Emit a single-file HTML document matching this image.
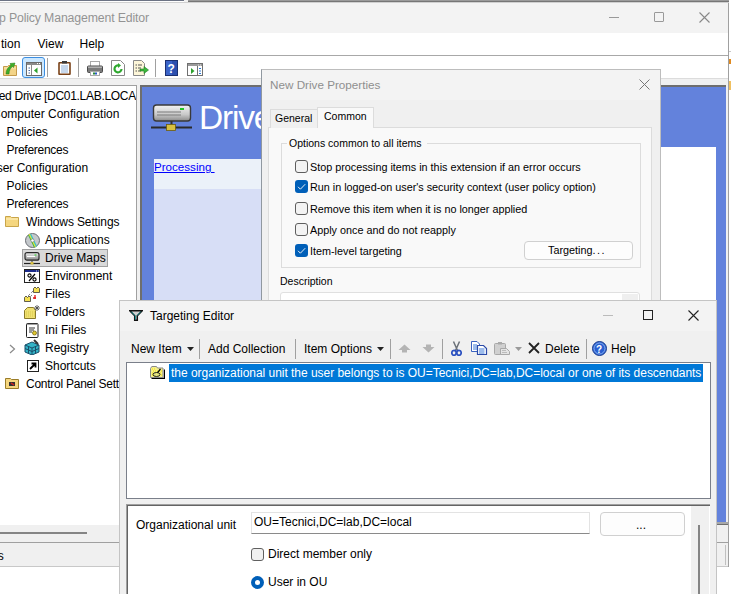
<!DOCTYPE html>
<html><head><meta charset="utf-8">
<style>
*{margin:0;padding:0;box-sizing:border-box}
html,body{width:731px;height:594px;overflow:hidden;background:#fff;font-family:"Liberation Sans",sans-serif;font-size:12px;color:#000}
.a{position:absolute}
.t{position:absolute;white-space:nowrap;line-height:1}
</style></head><body>
<div class="a" id="root" style="left:0;top:0;width:731px;height:594px;overflow:hidden">

<!-- ===== MAIN WINDOW ===== -->
<div class="a" style="left:0;top:0;width:729px;height:567px;background:#f0f0f0"></div>
<!-- top border -->
<div class="a" style="left:0;top:0;width:184px;height:1px;background:#6c7384"></div>
<div class="a" style="left:0;top:1px;width:184px;height:1px;background:#fff"></div>
<div class="a" style="left:188px;top:0;width:543px;height:1px;background:#9a9a9a"></div>
<div class="a" style="left:188px;top:1px;width:543px;height:1px;background:#767676"></div>
<div class="a" style="left:0;top:2px;width:729px;height:1px;background:#d0d0d0"></div>
<!-- title bar -->
<div class="a" style="left:0;top:3px;width:728px;height:30px;background:#f3f3f3"></div>
<div class="t" style="left:-1px;top:12px;font-size:12.3px;color:#939393;letter-spacing:-0.15px">p Policy Management Editor</div>
<div class="a" style="left:609px;top:17px;width:10px;height:1px;background:#999"></div>
<div class="a" style="left:654px;top:12px;width:10px;height:10px;border:1px solid #999;border-radius:1px"></div>
<svg class="a" style="left:699px;top:12px" width="11" height="11"><path d="M0.5 0.5L10.5 10.5M10.5 0.5L0.5 10.5" stroke="#888" stroke-width="1.1"/></svg>
<!-- menu -->
<div class="a" style="left:0;top:33px;width:728px;height:22px;background:#fff"></div>
<div class="t" style="left:1px;top:38px">tion</div>
<div class="t" style="left:37.5px;top:38px">View</div>
<div class="t" style="left:79.5px;top:38px">Help</div>
<div class="a" style="left:0;top:55px;width:728px;height:1px;background:#a8a8a8"></div>
<!-- toolbar -->
<div class="a" style="left:0;top:56px;width:728px;height:22px;background:#fff"></div>
<div class="a" style="left:0;top:78px;width:728px;height:1px;background:#dcdcdc"></div>
<div class="a" style="left:728px;top:3px;width:1px;height:564px;background:#a0a0a0"></div>
<div class="a" style="left:729px;top:0;width:2px;height:594px;background:#fff"></div>

<div class="a" style="left:729px;top:51px;width:2px;height:1px;background:#c8c8c8"></div>
<div class="a" style="left:729px;top:59px;width:2px;height:5px;background:#e08a20"></div>
<div class="a" style="left:729px;top:81px;width:2px;height:9px;background:#f0c060"></div>
<!-- toolbar icons -->
<!-- folder up -->
<svg class="a" style="left:3px;top:61px" width="15" height="15"><path d="M0.5 5.5H4.5L5.5 4.5H13.5V14.5H0.5Z" fill="#f3d488" stroke="#c49a4a"/><path d="M1 7H13" stroke="#fbe7b0"/><path d="M3 13C3 9 5 6 8 4.5L7 2.5L12 2L10.5 6.5L9.5 5.5C7.5 7 6 9.5 6 13Z" fill="#3fae2a" stroke="#247a18" stroke-width="0.5"/></svg>
<div class="a" style="left:22px;top:57px;width:23px;height:21px;background:#cce8ff;border:1px solid #3d8ee0;border-radius:3px"></div>
<svg class="a" style="left:26px;top:62px" width="16" height="14"><rect x="0.5" y="0.5" width="15" height="13" fill="#fff" stroke="#6a6a6a"/><rect x="1" y="1" width="14" height="2" fill="#8a8a8a"/><path d="M11 1.5H12M13 1.5H14" stroke="#fff"/><path d="M5.5 3V13" stroke="#8a8a8a"/><path d="M2.5 6H4M2.5 8.5H4M2.5 11H4" stroke="#4a6aa0"/><path d="M11.5 5.5L8 8.5L11.5 11.5Z" fill="#2ca02c"/></svg>
<div class="a" style="left:47px;top:58px;width:1px;height:19px;background:#a0a0a0"></div>
<svg class="a" style="left:58px;top:61px" width="13" height="14"><rect x="1" y="1.8" width="11" height="11.5" rx="0.5" fill="#fff" stroke="#7a4218" stroke-width="1.6"/><rect x="4" y="0" width="5" height="2.5" fill="#3a3a3a"/><path d="M3 5H10M3 7H10M3 9H10M3 11H10" stroke="#8fb0d8"/></svg>
<div class="a" style="left:78px;top:58px;width:1px;height:19px;background:#a0a0a0"></div>
<svg class="a" style="left:87px;top:61px" width="16" height="15"><rect x="3.5" y="0.5" width="9" height="5" fill="#fff" stroke="#aaa"/><rect x="0.5" y="5" width="15" height="6.5" rx="1" fill="#7a7a7a" stroke="#4a4a4a"/><rect x="1" y="5.5" width="14" height="1.5" fill="#b0b0b0"/><rect x="3.5" y="10.5" width="9" height="4" fill="#fff" stroke="#aaa"/><rect x="6" y="11.5" width="2" height="2" fill="#2a8a3a"/><rect x="8" y="11.5" width="2" height="2" fill="#2a5ac8"/></svg>
<svg class="a" style="left:111px;top:60px" width="14" height="16"><path d="M0.5 0.5H9.5L13.5 4.5V15.5H0.5Z" fill="#fff" stroke="#888"/><path d="M10.5 9A3.5 3.5 0 1 1 8 5.5" fill="none" stroke="#2ea82e" stroke-width="2.2"/><path d="M7 3L10 5.5L7 8Z" fill="#2ea82e"/></svg>
<svg class="a" style="left:133px;top:60px" width="16" height="16"><path d="M0.5 0.5H8.5L11.5 3.5V15.5H0.5Z" fill="#fdf6d8" stroke="#888"/><path d="M2.5 5H4M5 5H9M2.5 8H4M5 8H8M2.5 11H4M5 11H8" stroke="#555"/><path d="M7 9H11V6.5L15.5 10L11 13.5V11H7Z" fill="#3cb83c" stroke="#1f7a1f" stroke-width="0.6"/></svg>
<div class="a" style="left:155px;top:59px;width:1px;height:18px;background:#a0a0a0"></div>
<svg class="a" style="left:165px;top:60px" width="13" height="16"><rect x="0.5" y="0.5" width="12" height="15" fill="#2c4fae" stroke="#1a2f70"/><rect x="1" y="1" width="6" height="14" fill="#3b63c8"/><text x="2.5" y="12.5" font-size="12" font-family="Liberation Sans" font-weight="bold" fill="#fff">?</text></svg>
<svg class="a" style="left:187px;top:63px" width="16" height="13"><rect x="0.5" y="0.5" width="15" height="12" fill="#fff" stroke="#707070"/><rect x="1" y="1" width="14" height="2" fill="#9a9a9a"/><path d="M11 2H12M13 2H14" stroke="#fff" stroke-width="0.8"/><path d="M12 5.5H14M12 8H14M12 10.5H14" stroke="#2a7ad8" stroke-width="1.2"/><path d="M4 5L7.5 8L4 11Z" fill="#2ca02c"/><path d="M10.5 3V12" stroke="#707070"/></svg>


<!-- tree pane -->
<div class="a" style="left:0;top:85px;width:137px;height:440px;background:#fff;border-top:1px solid #a0a0a0;border-right:1px solid #a0a0a0"></div>
<div class="a" style="left:0;top:0;width:136px;height:525px;overflow:hidden">
<div class="t" style="left:-14px;top:90px;letter-spacing:-0.3px">pped Drive [DC01.LAB.LOCAL]</div>
<div class="t" style="left:-8px;top:108px">Computer Configuration</div>
<div class="t" style="left:6.5px;top:126px">Policies</div>
<div class="t" style="left:6.5px;top:144px;letter-spacing:-0.28px">Preferences</div>
<div class="t" style="left:-12px;top:162px">User Configuration</div>
<div class="t" style="left:6.5px;top:180px">Policies</div>
<div class="t" style="left:6.5px;top:198px;letter-spacing:-0.28px">Preferences</div>
<svg class="a" style="left:5px;top:214px" width="15" height="14"><path d="M0.5 2.5H5.5L6.5 3.5H13.5V12.5H0.5Z" fill="#f5d67f" stroke="#c9a54a"/><path d="M1 5H13" stroke="#fff3c8"/></svg>
<div class="t" style="left:26px;top:216px;letter-spacing:-0.13px">Windows Settings</div>
<svg class="a" style="left:25px;top:233px" width="15" height="15"><circle cx="7.5" cy="7.5" r="7" fill="#c4c8cc" stroke="#6a6e74"/><path d="M4.5 1.2L10.5 13.8" stroke="#e8e838" stroke-width="2.5"/><path d="M5.5 1L11.5 13.6" stroke="#30c0d0" stroke-width="1.2"/><path d="M3.5 2L9.5 14.4" stroke="#40b040" stroke-width="1"/><circle cx="7.5" cy="7.5" r="1.6" fill="#fff" stroke="#777" stroke-width="0.6"/></svg>
<div class="t" style="left:45px;top:234px">Applications</div>
<div class="a" style="left:22px;top:249px;width:86px;height:18px;background:#d9d9d9;border:1px solid #a0a0a0"></div>
<svg class="a" style="left:24px;top:252px" width="16" height="13"><defs><linearGradient id="dg2" x1="0" y1="0" x2="0" y2="1"><stop offset="0" stop-color="#f0f0f0"/><stop offset="1" stop-color="#8a8a8a"/></linearGradient></defs><rect x="1" y="0.7" width="14" height="7.5" rx="2" fill="url(#dg2)" stroke="#2a2a2a" stroke-width="1.2"/><path d="M3 4.5H11" stroke="#fff"/><rect x="10.5" y="2.5" width="2" height="1" fill="#22cc22"/><path d="M8 8.5V10.5" stroke="#333"/><path d="M0 11.5H16" stroke="#222" stroke-width="1.2"/><rect x="6.5" y="10" width="3" height="2.5" fill="#d8c040"/></svg>
<div class="t" style="left:45px;top:252px">Drive Maps</div>
<svg class="a" style="left:24px;top:269px" width="16" height="14"><rect x="0.5" y="0.5" width="15" height="13" fill="#fff" stroke="#222"/><rect x="1" y="1" width="14" height="2" fill="#1a2a8a"/><path d="M12 2H13M14 2H14.6" stroke="#fff" stroke-width="0.8"/><circle cx="5.5" cy="6.5" r="1.6" fill="none" stroke="#000" stroke-width="1.1"/><circle cx="10.5" cy="10.5" r="1.6" fill="none" stroke="#000" stroke-width="1.1"/><path d="M11 5L5 12" stroke="#000" stroke-width="1.2"/></svg>
<div class="t" style="left:45px;top:270px">Environment</div>
<svg class="a" style="left:24px;top:286px" width="16" height="16"><path d="M9.5 2.5L11 1L12.5 2.5L14 1L15.5 2.5V6.5H9.5Z" fill="#f5e050" stroke="#222" stroke-width="0.7"/><path d="M0.5 11.5L2 10L3.5 11.5L5 10L6.5 11.5V15.5H0.5Z" fill="#f5e050" stroke="#222" stroke-width="0.7"/><path d="M9 5L7 7M6 8L4 10M8 9L6 11" stroke="#222" stroke-width="0.8" stroke-dasharray="1 1"/><path d="M11 9V13M9 12H12" stroke="#e01818" stroke-width="1.3"/></svg>
<div class="t" style="left:45px;top:288px">Files</div>
<svg class="a" style="left:24px;top:305px" width="17" height="14"><path d="M0.5 5.5L3.5 2.5H9.5L11.5 5.5V13.5H0.5Z" fill="#f0e070" stroke="#8a7a2a"/><path d="M2 7H11M2 9H11M2 11H11" stroke="#d6c648" stroke-dasharray="1 1"/><path d="M13 0V6M10 3H16M11 1L15 5M15 1L11 5" stroke="#444" stroke-width="0.8"/></svg>
<div class="t" style="left:45px;top:306px">Folders</div>
<svg class="a" style="left:26px;top:322px" width="13" height="16"><rect x="0.5" y="1.5" width="11.5" height="14" rx="1" fill="#fff" stroke="#222"/><path d="M2 1V3M4 1V3M6 1V3M8 1V3M10 1V3" stroke="#444"/><path d="M3 6H9M3 8H8M3 10H6" stroke="#333"/><circle cx="8.5" cy="11" r="2" fill="#e0c830" stroke="#7a6a10" stroke-width="0.8"/></svg>
<div class="t" style="left:45px;top:324px">Ini Files</div>
<svg class="a" style="left:9px;top:344px" width="7" height="10"><path d="M1 1L5.5 5L1 9" fill="none" stroke="#8a8a8a" stroke-width="1.2"/></svg>
<svg class="a" style="left:24px;top:339px" width="16" height="16"><path d="M1 6L8 3L15 6V13L8 16L1 13Z" fill="#33b3c6" stroke="#1a4f6a"/><path d="M1 6L8 9L15 6M8 9V16M4.5 7.5V14.5M11.5 7.5V14.5M1 9.5L8 12.5L15 9.5" stroke="#1a4f6a" fill="none"/><path d="M10 1L14 5" stroke="#333" stroke-width="2"/></svg>
<div class="t" style="left:45px;top:342px">Registry</div>
<svg class="a" style="left:27px;top:360px" width="12" height="12"><rect x="0.5" y="0.5" width="11" height="11" fill="#fff" stroke="#222"/><path d="M3 9L7.5 4.5M4.5 3.5H8.5V7.5" stroke="#000" stroke-width="1.8" fill="none"/></svg>
<div class="t" style="left:45px;top:360px">Shortcuts</div>
<svg class="a" style="left:5px;top:376px" width="15" height="14"><path d="M0.5 2.5H5.5L6.5 3.5H13.5V12.5H0.5Z" fill="#f5d67f" stroke="#9a7d2a"/><path d="M4 6H10V10H4Z" fill="#333"/><path d="M6 7L9 9" stroke="#e02020" stroke-width="1.5"/></svg>
<div class="t" style="left:26px;top:378px;letter-spacing:-0.25px">Control Panel Settings</div>
</div>


<!-- blue panel -->
<div class="a" style="left:140px;top:85px;width:586px;height:438px;background:#6382dc;border-left:2px solid #6e6e6e;border-top:2px solid #6e6e6e"></div>
<svg class="a" style="left:151px;top:104px" width="41" height="27">
<defs><linearGradient id="dg" x1="0" y1="0" x2="0" y2="1"><stop offset="0" stop-color="#f4f4f4"/><stop offset="0.6" stop-color="#c8c8c8"/><stop offset="1" stop-color="#8a8a8a"/></linearGradient></defs>
<rect x="2.5" y="1" width="37" height="16" rx="3" fill="url(#dg)" stroke="#3a3a3a" stroke-width="1.4"/>
<path d="M6 8H30M6 11H30" stroke="#7a7a7a" stroke-width="1"/>
<rect x="29" y="4" width="4" height="2" fill="#22c422"/>
<rect x="19.5" y="17" width="2" height="5" fill="#333"/>
<rect x="0" y="22.5" width="41" height="2" fill="#2a2a2a"/>
<rect x="15.5" y="20.5" width="9" height="6" fill="#d8c040" stroke="#6a5a10" stroke-width="0.8"/>
</svg>
<div class="t" style="left:199px;top:101px;font-size:33.5px;color:#fff;letter-spacing:-1.2px">Drive</div>
<div class="a" style="left:154px;top:159px;width:110px;height:30px;background:#ebf1f9"></div>
<div class="a" style="left:154px;top:189px;width:110px;height:340px;background:#d7def6"></div>
<div class="t" style="left:154px;top:161px;font-size:11.6px;color:#0000ff;text-decoration:underline">Processing&nbsp;</div>
<div class="a" style="left:661px;top:147px;width:55px;height:380px;background:#fff"></div>

<div class="a" style="left:140px;top:522px;width:588px;height:3px;background:#a8a8a8;border-bottom:1px solid #6e6e6e"></div>
<!-- horizontal scrollbar + status bar -->
<div class="a" style="left:0;top:525px;width:728px;height:17px;background:#f0f0f0"></div>
<div class="a" style="left:0;top:532px;width:87px;height:2px;background:#858585"></div>
<div class="a" style="left:0;top:542px;width:728px;height:1px;background:#a0a0a0"></div>
<div class="a" style="left:0;top:543px;width:728px;height:23px;background:#f0f0f0"></div>
<div class="t" style="left:-9px;top:550px">ns</div>
<div class="a" style="left:0;top:566px;width:728px;height:1px;background:#c8c8c8"></div>
<div class="a" style="left:725px;top:545px;width:1px;height:20px;background:#c0c0c0"></div>
<div class="a" style="left:0;top:567px;width:731px;height:27px;background:#fff"></div>

<!-- ===== NEW DRIVE PROPERTIES ===== -->
<div class="a" style="left:261px;top:69px;width:400px;height:240px;background:#f0f0f0;border:1px solid #bdbdbd;border-left-color:#9098a0"></div>
<div class="a" style="left:262px;top:70px;width:398px;height:30px;background:#f3f3f3"></div>
<div class="t" style="left:270px;top:79px;font-size:11.7px;color:#8f8f8f">New Drive Properties</div>
<svg class="a" style="left:639px;top:79px" width="11" height="11"><path d="M0.5 0.5L10.5 10.5M10.5 0.5L0.5 10.5" stroke="#777" stroke-width="1"/></svg>
<!-- tabs -->
<div class="a" style="left:268px;top:127px;width:384px;height:190px;background:#f9f9f9;border:1px solid #dcdcdc"></div>
<div class="a" style="left:270px;top:109px;width:48px;height:19px;background:#f0f0f0;border:1px solid #dcdcdc;border-bottom:none"></div>
<div class="a" style="left:317px;top:107px;width:57px;height:21px;background:#f9f9f9;border:1px solid #dcdcdc;border-bottom:none"></div>
<div class="t" style="left:275px;top:113px;font-size:10.5px">General</div>
<div class="t" style="left:324px;top:111px;font-size:10.5px">Common</div>
<!-- group box -->
<div class="a" style="left:281px;top:143px;width:360px;height:125px;border:1px solid #dcdcdc"></div>
<div class="t" style="left:287px;top:138px;font-size:10.5px;background:#f9f9f9;padding:0 6px 0 2px">Options common to all items</div>
<div class="a" style="left:295px;top:160px;width:13px;height:13px;background:#f3f3f3;border:1px solid #5e5e5e;border-radius:3px"></div><div class="t" style="left:310px;top:162px;font-size:10.8px">Stop processing items in this extension if an error occurs</div>
<div class="a" style="left:295px;top:180px;width:13px;height:13px;background:#005fb8;border-radius:3px"></div><svg class="a" style="left:295px;top:180px" width="13" height="13"><path d="M3 6.8L5.4 9.2L10.2 4.2" fill="none" stroke="#fff" stroke-width="0.9"/></svg><div class="t" style="left:310px;top:182px;font-size:10.8px">Run in logged-on user's security context (user policy option)</div>
<div class="a" style="left:295px;top:202px;width:13px;height:13px;background:#f3f3f3;border:1px solid #5e5e5e;border-radius:3px"></div><div class="t" style="left:310px;top:204px;font-size:10.8px">Remove this item when it is no longer applied</div>
<div class="a" style="left:295px;top:223px;width:13px;height:13px;background:#f3f3f3;border:1px solid #5e5e5e;border-radius:3px"></div><div class="t" style="left:310px;top:225px;font-size:10.8px">Apply once and do not reapply</div>
<div class="a" style="left:295px;top:244px;width:13px;height:13px;background:#005fb8;border-radius:3px"></div><svg class="a" style="left:295px;top:244px" width="13" height="13"><path d="M3 6.8L5.4 9.2L10.2 4.2" fill="none" stroke="#fff" stroke-width="0.9"/></svg><div class="t" style="left:310px;top:246px;font-size:10.8px">Item-level targeting</div>

<div class="a" style="left:524px;top:241px;width:109px;height:19px;background:#fdfdfd;border:1px solid #d0d0d0;border-radius:4px"></div>
<div class="t" style="left:548px;top:245px;font-size:10.8px">Targeting<span style="letter-spacing:1.5px">...</span></div>
<div class="t" style="left:280px;top:276px;font-size:10.5px">Description</div>
<div class="a" style="left:280px;top:292px;width:360px;height:30px;background:#fff;border:1px solid #e0e0e0;border-radius:3px"></div>
<div class="a" style="left:622px;top:294px;width:16px;height:8px;background:#efefef"></div>

<!-- ===== TARGETING EDITOR ===== -->
<div class="a" style="left:119px;top:300px;width:598px;height:300px;background:#f0f0f0;border:1px solid #c4c4c4"></div>
<div class="a" style="left:120px;top:301px;width:596px;height:30px;background:#f3f3f3"></div>
<svg class="a" style="left:129px;top:310px" width="14" height="11"><path d="M0.8 0.8H13.2L8.3 5.8V10.3H5.7V5.8Z" fill="#d0d0d0" stroke="#111" stroke-width="1.5"/><path d="M2.2 1.6L6 5.6M11.8 1.6L8 5.6M6.4 6V9.5" stroke="#1a9a9a" stroke-width="1"/></svg>
<div class="t" style="left:150px;top:310px">Targeting Editor</div>
<div class="a" style="left:603px;top:315px;width:10px;height:1px;background:#bbb"></div>
<div class="a" style="left:643px;top:310px;width:10px;height:10px;border:1px solid #222"></div>
<svg class="a" style="left:688px;top:310px" width="11" height="11"><path d="M0.5 0.5L10.5 10.5M10.5 0.5L0.5 10.5" stroke="#222" stroke-width="1.1"/></svg>
<!-- toolbar -->
<div class="t" style="left:131px;top:343px">New Item</div>
<svg class="a" style="left:187px;top:347px" width="7" height="4"><path d="M0 0H7L3.5 4Z" fill="#222"/></svg>
<div class="a" style="left:199px;top:339px;width:1px;height:20px;background:#a0a0a0"></div>
<div class="t" style="left:208px;top:343px">Add Collection</div>
<div class="a" style="left:295px;top:339px;width:1px;height:20px;background:#a0a0a0"></div>
<div class="t" style="left:304px;top:343px">Item Options</div>
<svg class="a" style="left:377px;top:347px" width="7" height="4"><path d="M0 0H7L3.5 4Z" fill="#222"/></svg>
<div class="a" style="left:390px;top:339px;width:1px;height:20px;background:#a0a0a0"></div>
<svg class="a" style="left:398px;top:344px" width="13" height="9"><path d="M6.5 0.5L12.5 6H9V8.5H4V6H0.5Z" fill="#b4b4b4"/></svg>
<svg class="a" style="left:422px;top:344px" width="13" height="9"><path d="M6.5 8.5L12.5 3H9V0.5H4V3H0.5Z" fill="#b4b4b4"/></svg>
<div class="a" style="left:442px;top:339px;width:1px;height:20px;background:#a0a0a0"></div>
<svg class="a" style="left:451px;top:341px" width="11" height="15"><path d="M2.5 0.5L6.5 9.5M8.5 0.5L4.5 9.5" stroke="#6a7078" stroke-width="1.5"/><ellipse cx="3" cy="11.8" rx="2.2" ry="2.5" fill="none" stroke="#2a50c0" stroke-width="1.7"/><ellipse cx="8" cy="11.8" rx="2.2" ry="2.5" fill="none" stroke="#2a50c0" stroke-width="1.7"/></svg>
<svg class="a" style="left:471px;top:341px" width="17" height="15"><path d="M0.5 0.5H6L8.5 3V10.5H0.5Z" fill="#fff" stroke="#3a62c0"/><path d="M2 4H6M2 6H6M2 8H6" stroke="#3a78d8"/><path d="M6.5 4.5H12.5L15.5 7.5V13.5H6.5Z" fill="#fff" stroke="#2a4aa8" stroke-width="1.2"/><path d="M8 8H13.5M8 10H13.5M8 12H13.5" stroke="#3a78d8"/></svg>
<svg class="a" style="left:494px;top:342px" width="17" height="13"><rect x="0.5" y="1.5" width="11" height="11" rx="1" fill="#d0d0d0" stroke="#a8a8a8"/><rect x="4" y="0" width="4" height="2.5" fill="#aaa"/><path d="M6.5 6.5H12.5L15.5 9.5V12.5H6.5Z" fill="#e4e4e4" stroke="#a8a8a8"/><path d="M8 8.5H12M8 10.5H13" stroke="#bbb"/></svg>
<svg class="a" style="left:515px;top:347px" width="7" height="4"><path d="M0 0H7L3.5 4Z" fill="#9a9a9a"/></svg>
<svg class="a" style="left:528px;top:342px" width="12" height="12"><path d="M1 1L11 11M11 1L1 11" stroke="#222" stroke-width="1.8"/></svg>
<div class="t" style="left:545px;top:343px">Delete</div>
<div class="a" style="left:586px;top:339px;width:1px;height:20px;background:#a0a0a0"></div>
<svg class="a" style="left:592px;top:341px" width="15" height="15"><circle cx="7.5" cy="7.5" r="7" fill="#2a5fd0" stroke="#1a3c8c"/><circle cx="7.5" cy="7.5" r="5.5" fill="none" stroke="#9cc0f5" stroke-width="0.8"/><text x="4" y="11.5" font-size="10" font-family="Liberation Sans" font-weight="bold" fill="#fff">?</text></svg>
<div class="t" style="left:611px;top:343px">Help</div>


<!-- list -->
<div class="a" style="left:126px;top:362px;width:585px;height:137px;background:#fff;border:1px solid #7a7f8a"></div>
<div class="a" style="left:169px;top:364px;width:534px;height:18px;background:#0078d7"></div>
<svg class="a" style="left:150px;top:366px" width="15" height="13"><path d="M1.5 12.5H14.5V3.5" stroke="#000" stroke-width="1.4" fill="none"/><path d="M0.5 11.5V2.5L1.8 0.5H6.5L7.5 2H13V11.5Z" fill="#f6f08a" stroke="#8a8a8a"/><path d="M2 3H5M3 5H12M2 7H4M10 7H12M2 9H5M11 9H12" stroke="#f0e000" stroke-dasharray="1 1"/><path d="M10.5 3L6 8.5" stroke="#000" stroke-width="1.2"/><ellipse cx="6.5" cy="8.5" rx="3.5" ry="2" fill="#e8e880" stroke="#111" stroke-width="0.9"/></svg>
<div class="t" style="left:171px;top:367px;color:#fff;letter-spacing:-0.03px">the organizational unit the user belongs to is OU=Tecnici,DC=lab,DC=local or one of its descendants</div>
<!-- lower panel -->
<div class="a" style="left:126px;top:504px;width:584px;height:100px;background:#fff;border-top:1px solid #a0a0a0;border-left:1px solid #a0a0a0;box-shadow:inset 1px 1px 0 #646464"></div>
<div class="t" style="left:136px;top:519px">Organizational unit</div>
<div class="a" style="left:251px;top:512px;width:339px;height:22px;background:#fff;border:1px solid #e3e3e3;border-bottom:1px solid #8a8a8a"></div>
<div class="t" style="left:254px;top:516px">OU=Tecnici,DC=lab,DC=local</div>
<div class="a" style="left:600px;top:512px;width:85px;height:24px;background:#fdfdfd;border:1px solid #d0d0d0;border-radius:4px"></div>
<div class="t" style="left:636px;top:519px">...</div>
<div class="a" style="left:251px;top:548px;width:13px;height:13px;background:#f0f0f0;border:1px solid #606060;border-radius:3px"></div>
<div class="t" style="left:268px;top:548px">Direct member only</div>
<div class="a" style="left:251px;top:576px;width:13px;height:13px;border-radius:50%;background:#005fb8"></div>
<div class="a" style="left:255px;top:580px;width:5px;height:5px;border-radius:50%;background:#fff"></div>
<div class="t" style="left:268px;top:576px">User in OU</div>
<div class="a" style="left:691px;top:506px;width:18px;height:90px;background:#f0f0f0"></div>
<div class="a" style="left:698px;top:525px;width:2px;height:70px;background:#858585"></div>

</div>
</body></html>
